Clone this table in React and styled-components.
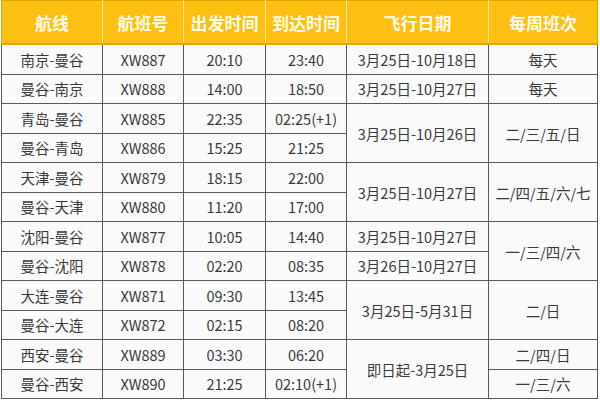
import React from "react";
import styled, { createGlobalStyle } from "styled-components";

const Global = createGlobalStyle`
  html, body { margin: 0; padding: 0; background: #fff; }
  body { font-family: "Noto Sans CJK SC", "Noto Sans", sans-serif; }
`;

const Wrap = styled.div`
  width: 600px;
  height: 400px;
  padding: 0 3px 0 1px;
  box-sizing: border-box;
  background: #fff;
`;

const Table = styled.table`
  width: 596px;
  border-collapse: collapse;
  table-layout: fixed;
  background: #fafafa;
  color: #3a3a3a;
`;

const Head = styled.th`
  height: 42px;
  padding: 0;
  background: #fcc012;
  color: #fffbe8;
  font-size: 17px;
  font-weight: 700;
  text-align: center;
  border: 1px solid #fde7a0;
  border-top-color: #e3a200;
  border-bottom: 2px solid #e3a200;
  &:first-child { border-left-color: #e3a200; }
  &:last-child { border-right-color: #e3a200; }
`;

const Cell = styled.td`
  height: 28.5px;
  padding: 0;
  font-size: 14.5px;
  text-align: center;
  white-space: nowrap;
  border: 1px solid #5a5a5a;
  letter-spacing: ${(p) => (p.$wide ? "-0.2px" : "0")};
`;

const cols = [101, 81, 82, 81, 142, 109];

const rows = [
  ["南京-曼谷", "XW887", "20:10", "23:40", ["3月25日-10月18日", 1], ["每天", 1]],
  ["曼谷-南京", "XW888", "14:00", "18:50", ["3月25日-10月27日", 1], ["每天", 1]],
  ["青岛-曼谷", "XW885", "22:35", "02:25(+1)", ["3月25日-10月26日", 2], ["二/三/五/日", 2]],
  ["曼谷-青岛", "XW886", "15:25", "21:25", null, null],
  ["天津-曼谷", "XW879", "18:15", "22:00", ["3月25日-10月27日", 2], ["二/四/五/六/七", 2]],
  ["曼谷-天津", "XW880", "11:20", "17:00", null, null],
  ["沈阳-曼谷", "XW877", "10:05", "14:40", ["3月25日-10月27日", 1], ["一/三/四/六", 2]],
  ["曼谷-沈阳", "XW878", "02:20", "08:35", ["3月26日-10月27日", 1], null],
  ["大连-曼谷", "XW871", "09:30", "13:45", ["3月25日-5月31日", 2], ["二/日", 2]],
  ["曼谷-大连", "XW872", "02:15", "08:20", null, null],
  ["西安-曼谷", "XW889", "03:30", "06:20", ["即日起-3月25日", 2], ["二/四/日", 1]],
  ["曼谷-西安", "XW890", "21:25", "02:10(+1)", null, ["一/三/六", 1]],
];

const headers = ["航线", "航班号", "出发时间", "到达时间", "飞行日期", "每周班次"];

export default function App() {
  return (
    <Wrap>
      <Global />
      <Table>
        <colgroup>
          {cols.map((w, i) => (
            <col key={i} style={{ width: w }} />
          ))}
        </colgroup>
        <thead>
          <tr>
            {headers.map((h) => (
              <Head key={h}>{h}</Head>
            ))}
          </tr>
        </thead>
        <tbody>
          {rows.map((r, i) => (
            <tr key={i}>
              <Cell>{r[0]}</Cell>
              <Cell>{r[1]}</Cell>
              <Cell>{r[2]}</Cell>
              <Cell>{r[3]}</Cell>
              {r[4] && <Cell rowSpan={r[4][1]}>{r[4][0]}</Cell>}
              {r[5] && <Cell rowSpan={r[5][1]}>{r[5][0]}</Cell>}
            </tr>
          ))}
        </tbody>
      </Table>
    </Wrap>
  );
}
